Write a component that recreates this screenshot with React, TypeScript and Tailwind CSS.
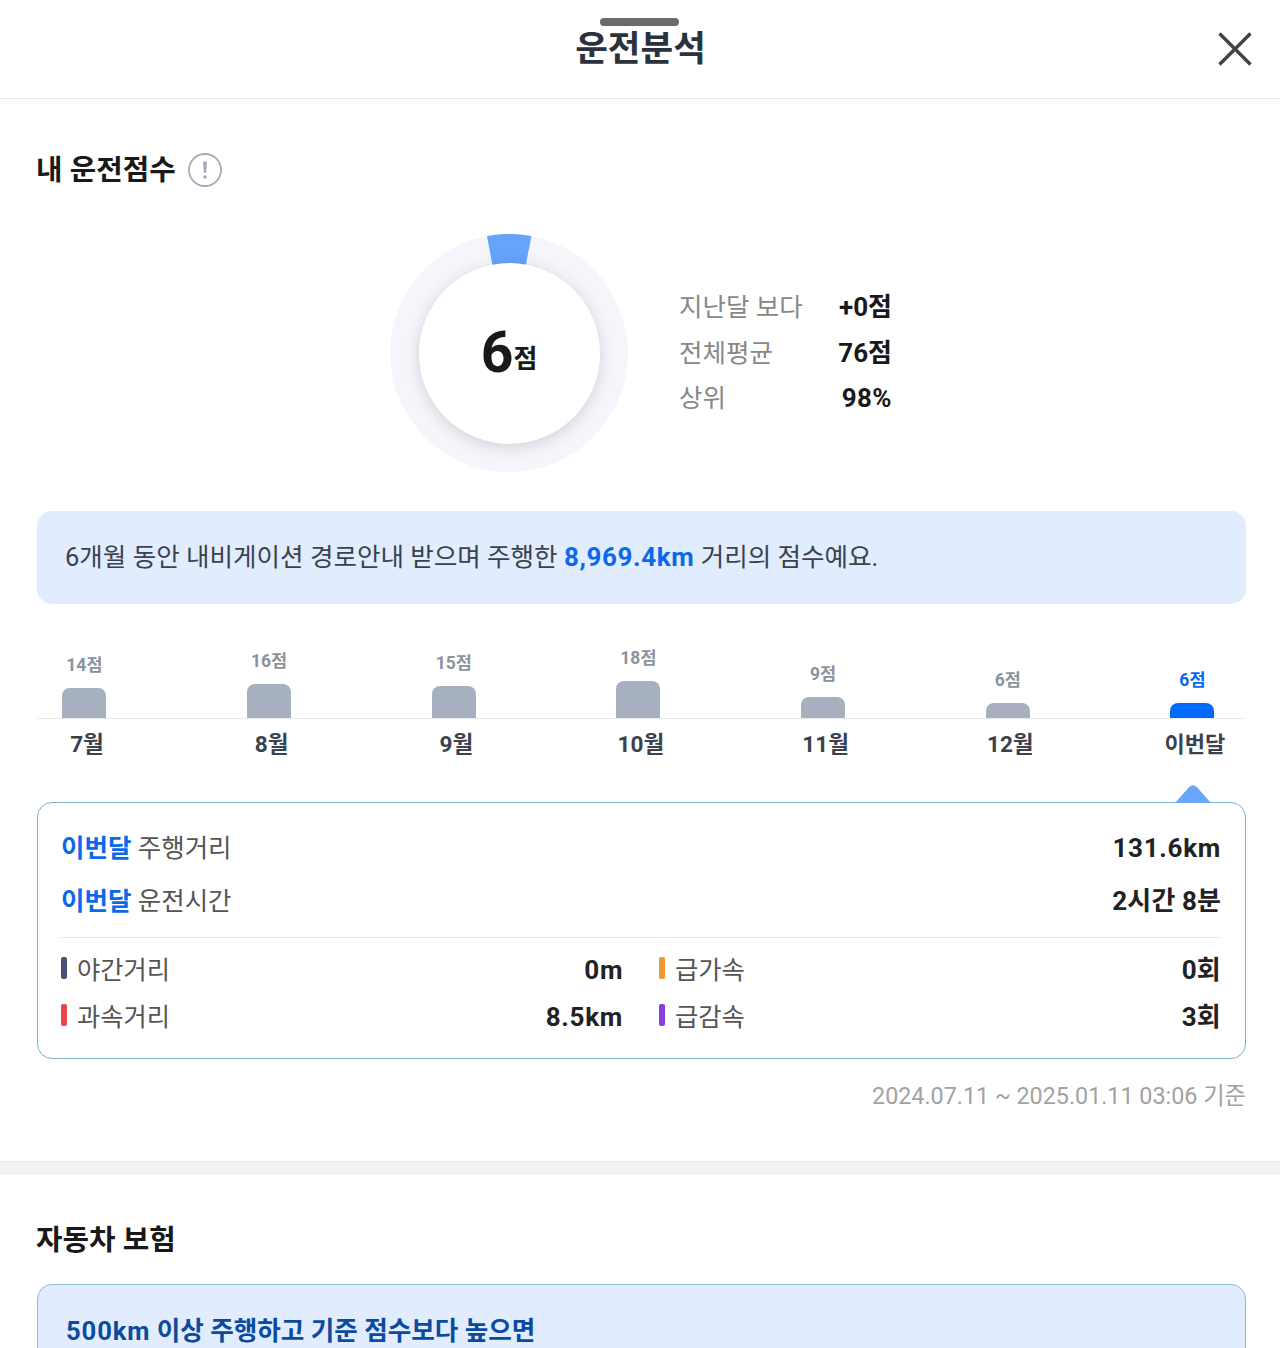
const months = [
  { label: "7월", score: 14, height: 30 },
  { label: "8월", score: 16, height: 34 },
  { label: "9월", score: 15, height: 32 },
  { label: "10월", score: 18, height: 37 },
  { label: "11월", score: 9, height: 21 },
  { label: "12월", score: 6, height: 15 },
  { label: "이번달", score: 6, height: 15, current: true },
];

const details = [
  { label: "야간거리", value: "0m", color: "bg-[#4b5078]", tracking: "tracking-[0.6px]" },
  { label: "급가속", value: "0회", color: "bg-[#f39436]", tracking: "tracking-[0.2px]" },
  { label: "과속거리", value: "8.5km", color: "bg-[#e8444c]", tracking: "tracking-[0.7px]" },
  { label: "급감속", value: "3회", color: "bg-[#8b3fd6]", tracking: "tracking-[0.2px]" },
];

const summary = [
  { label: "주행거리", value: "131.6km", tracking: "tracking-[0.7px]" },
  { label: "운전시간", value: "2시간 8분", tracking: "tracking-[0.1px]" },
];

function Header() {
  return (
    <header className="relative flex h-[99px] items-center justify-center border-b border-[#e6e7e9]">
      {/* Sheet drag handle */}
      <div className="absolute top-[18px] left-[600px] h-2 w-[79px] rounded-full bg-[#6b6b6b]" />
      <h1 className="pl-px text-[35.5px] leading-[50px] font-bold text-[#2b313d]">운전분석</h1>
      <button className="absolute top-[32px] right-[28px]" aria-label="닫기">
        <svg width="34" height="34" viewBox="0 0 34 34" fill="none" stroke="#434343" strokeWidth="3.4">
          <path d="M1.5 1.5 L32.5 32.5 M32.5 1.5 L1.5 32.5" />
        </svg>
      </button>
    </header>
  );
}

function Donut() {
  return (
    <div className="relative size-[238px]">
      <svg className="block" width="238" height="238" viewBox="0 0 238 238">
        <circle cx="119" cy="119" r="119" fill="#f5f6fb" />
        <path d="M119 119 L97 2 A119 119 0 0 1 141.4 2 Z" fill="#66a3fb" />
      </svg>
      <div className="absolute top-[29px] left-[28.5px] flex size-[181px] items-center justify-center rounded-full bg-white shadow-[0_3px_16px_rgba(0,0,0,0.15)]">
        <p className="flex items-baseline pt-0.5 font-bold text-[#191919]">
          <span className="text-[57px] leading-[60px]">6</span>
          <span className="mb-1 -translate-y-1 text-[26px]">점</span>
        </p>
      </div>
    </div>
  );
}

function ScoreChart() {
  return (
    <div>
      <div className="flex h-[115px] items-end justify-between border-b border-[#e8e9eb] pr-[31.5px] pl-[25.4px]">
        {months.map((m) => (
          <div key={m.label} className="flex w-11 flex-col items-center">
            <span
              className={
                m.current
                  ? "mb-[11px] text-[17.5px] leading-6 font-bold whitespace-nowrap text-[#0b68ea]"
                  : "mb-[11px] text-[17.5px] leading-6 font-bold whitespace-nowrap text-[#8b939d]"
              }
            >
              {m.score}점
            </span>
            <div
              className={m.current ? "w-full rounded-t-lg bg-[#006aff]" : "w-full rounded-t-lg bg-[#a6b0bf]"}
              style={{ height: m.height }}
            />
          </div>
        ))}
      </div>
      <div className="mt-[11px] flex justify-between pr-[29px] pl-7">
        {months.map((m) => (
          <div key={m.label} className="flex w-11 justify-center">
            <span
              className={
                m.current
                  ? "text-[22px] leading-[30px] font-bold whitespace-nowrap text-[#3b424e]"
                  : "text-[22.6px] leading-[30px] font-bold whitespace-nowrap text-[#3b424e]"
              }
            >
              {m.label}
            </span>
          </div>
        ))}
      </div>
    </div>
  );
}

function MonthCard() {
  return (
    <div className="relative mt-[42px] h-[257px] rounded-[15px] border-[1.5px] border-[#7fb0cf] pt-[25px] pr-6 pl-[23px]">
      <svg className="absolute top-[-18px] left-[1137px]" width="36" height="18" viewBox="0 0 36 18" fill="#6aa6f9">
        <path d="M0 18 L14 2.2 Q18 -1.6 22 2.2 L36 18 Z" />
      </svg>
      {summary.map((s) => (
        <div key={s.label} className="mb-[13px] flex justify-between text-[25.5px] leading-[40px]">
          <p className="text-[#555]">
            <b className="font-bold text-[#0b68ea]">이번달</b> {s.label}
          </p>
          <p className={`text-[26px] font-bold text-[#222] ${s.tracking}`}>{s.value}</p>
        </div>
      ))}
      <div className="mt-4 h-px bg-[#e4e5e7]" />
      <div className="mt-[9px] grid grid-cols-[562px_562px] justify-between">
        {details.map((d) => (
          <div key={d.label} className="flex h-[47px] items-center">
            <i className={`mb-1.5 h-[22px] w-1.5 rounded-[2px] ${d.color}`} />
            <span className="ml-2.5 text-[25.3px] text-[#555]">{d.label}</span>
            <span className={`ml-auto text-[26px] font-bold text-[#222] ${d.tracking}`}>{d.value}</span>
          </div>
        ))}
      </div>
    </div>
  );
}

export default function App() {
  return (
    <div className="h-[1348px] w-[1280px] overflow-hidden bg-white font-['Roboto','Noto_Sans_CJK_KR',sans-serif]">
      <Header />

      <section className="h-[1062px] pt-[51px] pr-[34px] pl-[37px]">
        <div className="flex h-10 items-center gap-3">
          <h2 className="-ml-px text-[28.8px] leading-10 font-bold text-[#191919]">내 운전점수</h2>
          <svg width="34" height="34" viewBox="0 0 34 34" fill="none">
            <circle cx="17" cy="17" r="16" stroke="#a3abb8" strokeWidth="1.8" />
            <path d="M15.1 9.4 Q15 8.6 15.8 8.6 H18.2 Q19 8.6 18.9 9.4 L18.2 19 Q18.1 20 17 20 Q15.9 20 15.8 19 Z" fill="#a3abb8" />
            <circle cx="17" cy="24" r="1.8" fill="#a3abb8" />
          </svg>
        </div>

        <div className="mt-11 flex items-center pl-[353px]">
          <Donut />
          <dl className="mt-px ml-[51px] grid w-[213px] grid-cols-[auto_auto] justify-between text-[25.5px] leading-[45.5px]">
            <dt className="text-[#888]">지난달 보다</dt>
            <dd className="text-right text-[26px] font-bold text-[#191919]">+0점</dd>
            <dt className="text-[#888]">전체평균</dt>
            <dd className="text-right text-[26px] font-bold text-[#191919]">76점</dd>
            <dt className="text-[#888]">상위</dt>
            <dd className="text-right text-[26px] font-bold tracking-[0.4px] text-[#191919]">98%</dd>
          </dl>
        </div>

        <div className="mt-[39px] flex h-[93px] items-center rounded-[15px] bg-[#e1edfe] pl-7">
          <p className="text-[25.55px] text-[#3b424e]">
            6개월 동안 내비게이션 경로안내 받으며 주행한{" "}
            <b className="text-[26px] font-bold tracking-[0.6px] text-[#0b68ea]">8,969.4km</b> 거리의 점수예요.
          </p>
        </div>

        <ScoreChart />
        <MonthCard />
        <p className="mt-[21px] text-right text-[23.3px] leading-8 text-[#a2a2a2]">2024.07.11 ~ 2025.01.11 03:06 기준</p>
      </section>

      <div className="h-[13px] border-y border-[#e6e7e9] bg-[#f1f2f3]" />

      <section className="pt-[46px] pr-[34px] pl-[37px]">
        <h2 className="-ml-px text-[28.8px] leading-10 font-bold text-[#191919]">자동차 보험</h2>
        <div className="mt-6 h-[160px] rounded-[15px] border border-[#8fb8d6] bg-[#e1edfe] px-7 pt-[26px]">
          <p className="text-[25.6px] leading-10 font-bold text-[#0c4a9e]">
            <span className="tracking-[0.9px]">500km</span> 이상 주행하고 기준 점수보다 높으면
          </p>
        </div>
      </section>
    </div>
  );
}
